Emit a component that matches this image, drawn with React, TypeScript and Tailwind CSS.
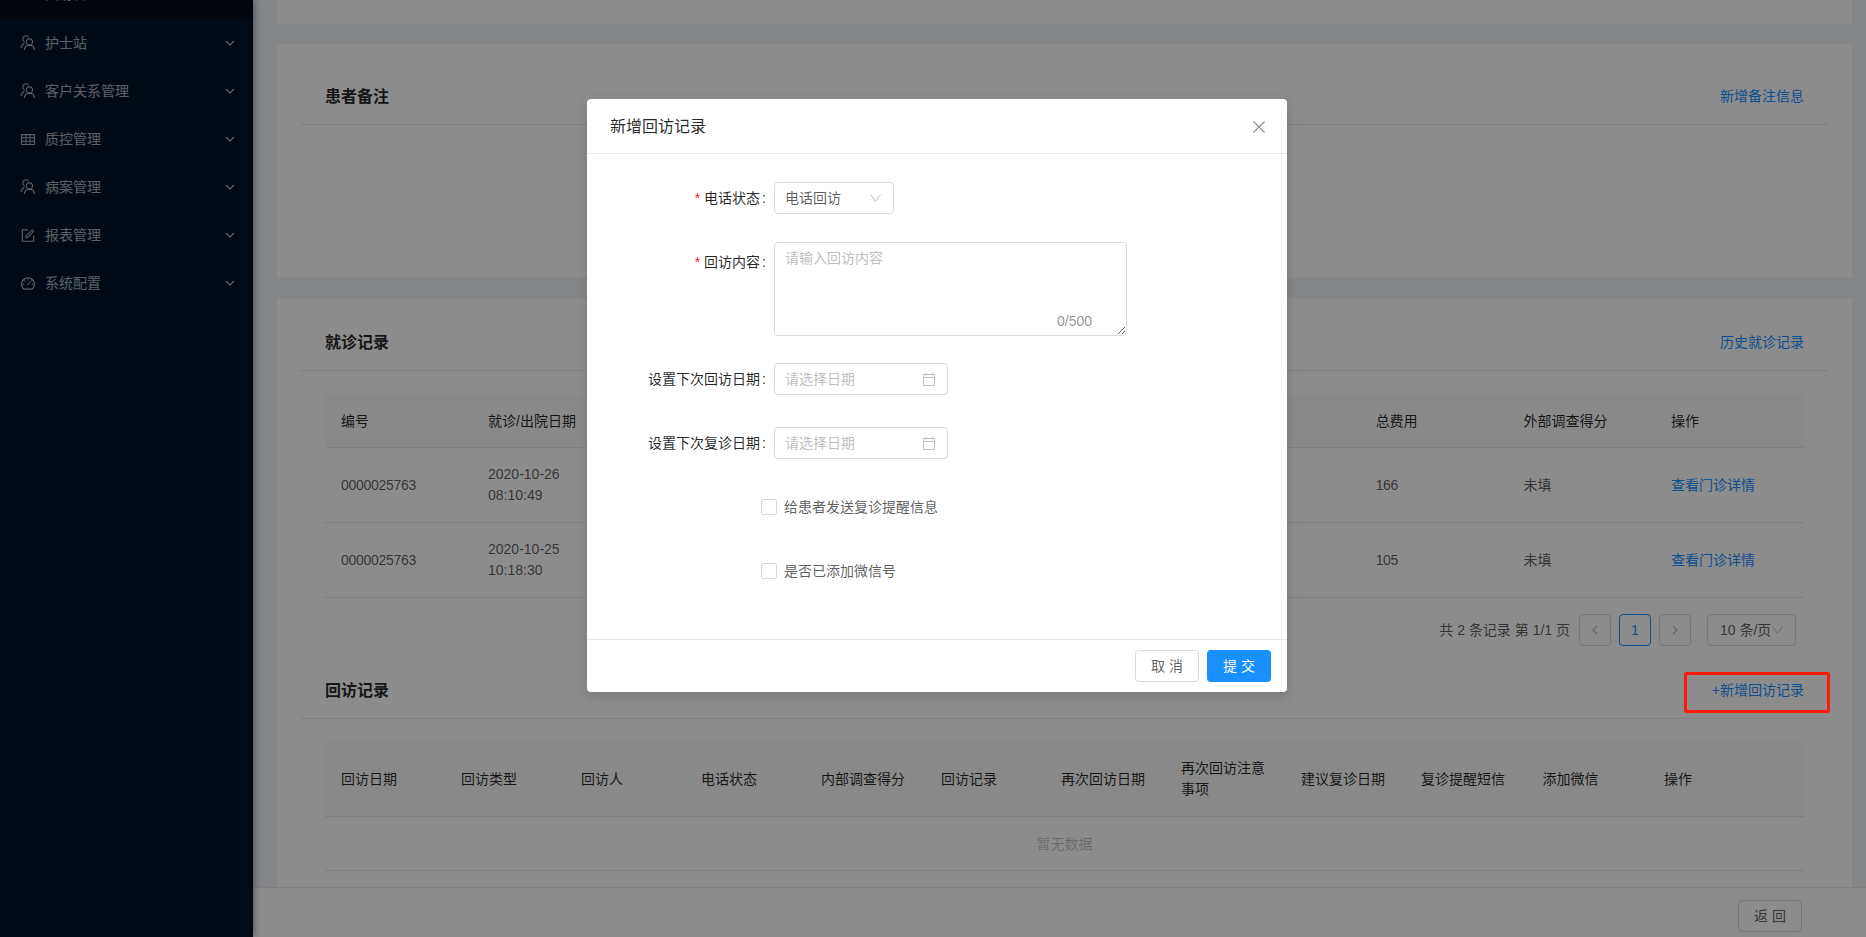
import { AiOutlineDashboard, AiOutlineForm, AiOutlineTable } from "react-icons/ai";

const TeamIcon = () => (
  <svg width="16" height="16" viewBox="0 0 16 16" fill="none" stroke="currentColor" strokeWidth="1.1">
    <path d="M8.6 1.8A3.4 3.4 0 1 0 4.6 7.2" />
    <path d="M4.4 8.6C2.5 9.4 1.3 11 1 13.2" />
    <circle cx="9.4" cy="7" r="3.1" />
    <path d="M4.4 15c.2-2.8 2.2-4.8 5-4.8s4.8 2 5 4.8" />
  </svg>
);

const Chevron = ({ className }: { className: string }) => (
  <svg className={className} viewBox="0 0 10 6" fill="none" stroke="currentColor" strokeWidth="1.4">
    <path d="M1 1l4 4 4-4" />
  </svg>
);

const ThinDown = () => (
  <svg className="w-[11px] h-[8px] text-[#bfbfbf]" viewBox="0 0 11 8" fill="none" stroke="currentColor">
    <path d="M.5 .5l5 7 5-7" />
  </svg>
);

const CalendarIcon = () => (
  <svg className="w-[14px] h-[14px] text-[#bfbfbf]" viewBox="0 0 14 14" fill="none" stroke="currentColor">
    <path d="M1.5 2.5h11v11h-11zM1.5 5.5h11M4 .5v3M10 .5v3" />
  </svg>
);

const menus = [
  { name: "护士站", icon: <TeamIcon /> },
  { name: "客户关系管理", icon: <TeamIcon /> },
  { name: "质控管理", icon: <AiOutlineTable size={17} /> },
  { name: "病案管理", icon: <TeamIcon /> },
  { name: "报表管理", icon: <AiOutlineForm size={17} /> },
  { name: "系统配置", icon: <AiOutlineDashboard size={17} /> },
];

const visitHeads = ["编号", "就诊/出院日期", "", "", "", "", "", "总费用", "外部调查得分", "操作"];
const visitRows = [
  { id: "0000025763", date: "2020-10-26", time: "08:10:49", fee: "166" },
  { id: "0000025763", date: "2020-10-25", time: "10:18:30", fee: "105" },
];
const followHeads = [
  "回访日期",
  "回访类型",
  "回访人",
  "电话状态",
  "内部调查得分",
  "回访记录",
  "再次回访日期",
  "再次回访注意事项",
  "建议复诊日期",
  "复诊提醒短信",
  "添加微信",
  "操作",
];

function Sidebar() {
  return (
    <aside className="relative z-10 w-[253px] shrink-0 bg-[#001529] text-white/65 shadow-[2px_0_6px_rgba(0,21,41,0.35)]">
      <div className="h-[19px] overflow-hidden bg-[#000c17] pl-[45px]">
        <div className="-mt-[17px] leading-[22px]">回访管理</div>
      </div>
      {menus.map((m) => (
        <div key={m.name} className="flex h-[48px] items-center justify-between pl-[20px] pr-[18px]">
          <div className="flex items-center gap-[9px]">
            <span className="flex w-[16px] justify-center">{m.icon}</span>
            <span>{m.name}</span>
          </div>
          <Chevron className="h-[6px] w-[10px]" />
        </div>
      ))}
    </aside>
  );
}

function SectionHead({ title, link }: { title: string; link: string }) {
  return (
    <div className="mx-[24px] flex h-[57px] items-center justify-between border-b border-[#e8e8e8] px-[24px]">
      <h3 className="pt-[1px] text-[16px] font-bold text-black/85">{title}</h3>
      <a className="text-[#1890ff]">{link}</a>
    </div>
  );
}

function VisitTable() {
  return (
    <div className="mx-[48px] mt-[23px] text-black/65">
      <div className="grid h-[54px] grid-cols-[147px_repeat(7,147.95px)_147.5px_1fr] items-center border-b border-[#e8e8e8] bg-[#fafafa] text-black/85">
        {visitHeads.map((h, i) => (
          <div key={i} className="px-[16px] whitespace-nowrap">{h}</div>
        ))}
      </div>
      {visitRows.map((r) => (
        <div key={r.date} className="grid h-[75px] grid-cols-[147px_repeat(7,147.95px)_147.5px_1fr] items-center border-b border-[#e8e8e8] leading-[21px]">
          <div className="px-[16px] tracking-[-0.3px]">{r.id}</div>
          <div className="px-[16px]">
            {r.date}
            <br />
            {r.time}
          </div>
          <div className="col-span-5" />
          <div className="px-[16px] tracking-[-0.3px]">{r.fee}</div>
          <div className="px-[16px]">未填</div>
          <div className="px-[16px] whitespace-nowrap text-[#1890ff]">查看门诊详情</div>
        </div>
      ))}
    </div>
  );
}

function Pager() {
  return (
    <div className="mx-[48px] mt-[16px] flex items-center justify-end pr-[8px] text-black/65">
      <span className="mr-[9px]">共 2 条记录 第 1/1 页</span>
      <div className="flex h-[32px] w-[32px] items-center justify-center rounded border border-[#d9d9d9] text-[#bfbfbf]">
        <Chevron className="h-[10px] w-[10px] rotate-90" />
      </div>
      <div className="ml-[8px] flex h-[32px] w-[32px] items-center justify-center rounded border border-[#1890ff] text-[#1890ff]">
        1
      </div>
      <div className="ml-[8px] flex h-[32px] w-[32px] items-center justify-center rounded border border-[#d9d9d9] text-[#bfbfbf]">
        <Chevron className="h-[10px] w-[10px] -rotate-90" />
      </div>
      <div className="ml-[16px] flex h-[32px] w-[89px] items-center justify-between rounded border border-[#d9d9d9] pl-[12px] pr-[12px]">
        <span className="whitespace-nowrap">10 条/页</span>
        <ThinDown />
      </div>
    </div>
  );
}

function FollowTable() {
  return (
    <div className="mx-[48px] mt-[23px] text-black/85">
      <div className="grid h-[75px] grid-cols-[repeat(9,120px)_121.5px_121.5px_1fr] items-center border-b border-[#e8e8e8] bg-[#fafafa] leading-[21px]">
        {followHeads.map((h) => (
          <div key={h} className="px-[16px]">{h}</div>
        ))}
      </div>
      <div className="flex h-[54px] items-center justify-center border-b border-[#e8e8e8] text-black/25">暂无数据</div>
    </div>
  );
}

function Row({ label, required, top, children }: { label: string; required?: boolean; top?: boolean; children: React.ReactNode }) {
  return (
    <div className="flex items-start">
      <label className={`flex h-[32px] w-[187px] items-center justify-end pr-[8px] text-black/85 ${top ? "mt-[4px]" : ""}`}>
        {required && <span className="mr-[4px] text-[#f5222d]">*</span>}
        {label}
        <span className="ml-[2px]">:</span>
      </label>
      {children}
    </div>
  );
}

function DateInput() {
  return (
    <div className="flex h-[32px] w-[174px] items-center rounded border border-[#d9d9d9] pl-[10px] pr-[11px]">
      <input readOnly placeholder="请选择日期" className="min-w-0 flex-1 outline-none placeholder:text-[#bfbfbf]" />
      <CalendarIcon />
    </div>
  );
}

function Check({ label }: { label: string }) {
  return (
    <div className="flex h-[16px] items-center gap-[7px] pl-[174px] text-black/65">
      <span className="h-[16px] w-[16px] rounded-[2px] border border-[#d9d9d9] bg-white" />
      <span>{label}</span>
    </div>
  );
}

function Dialog() {
  return (
    <div className="absolute left-[587px] top-[99px] z-30 flex h-[593px] w-[700px] flex-col rounded bg-white shadow-[0_4px_12px_rgba(0,0,0,0.15)]">
      <div className="flex h-[55px] items-center justify-between border-b border-[#e8e8e8] pl-[23px] pr-[22px] pt-[2px]">
        <h2 className="text-[16px] text-black/85">新增回访记录</h2>
        <svg className="h-[12px] w-[12px] text-black/45" viewBox="0 0 12 12" fill="none" stroke="currentColor" strokeWidth="1.1">
          <path d="M.5 .5l11 11M11.5 .5l-11 11" />
        </svg>
      </div>

      <div className="flex flex-1 flex-col pt-[28px]">
        <Row label="电话状态" required>
          <div className="flex h-[32px] w-[120px] items-center justify-between rounded border border-[#d9d9d9] pl-[10px] pr-[12px] text-black/65">
            <span>电话回访</span>
            <ThinDown />
          </div>
        </Row>
        <div className="mt-[28px]">
          <Row label="回访内容" required top>
            <div className="relative h-[94px] w-[353px]">
              <textarea
                readOnly
                placeholder="请输入回访内容"
                className="block h-full w-full resize rounded border border-[#d9d9d9] px-[10px] py-[4px] outline-none placeholder:text-[#bfbfbf]"
              />
              <span className="absolute bottom-[4px] right-[35px] text-black/45">0/500</span>
            </div>
          </Row>
        </div>
        <div className="mt-[27px]">
          <Row label="设置下次回访日期">
            <DateInput />
          </Row>
        </div>
        <div className="mt-[32px]">
          <Row label="设置下次复诊日期">
            <DateInput />
          </Row>
        </div>
        <div className="mt-[40px]">
          <Check label="给患者发送复诊提醒信息" />
        </div>
        <div className="mt-[48px]">
          <Check label="是否已添加微信号" />
        </div>
      </div>

      <div className="flex h-[53px] items-start justify-end gap-[8px] border-t border-[#e8e8e8] px-[16px] pt-[10px]">
        <button className="h-[32px] w-[64px] rounded border border-[#d9d9d9] bg-white text-black/65">取 消</button>
        <button className="h-[32px] w-[64px] rounded bg-[#1890ff] text-white">提 交</button>
      </div>
    </div>
  );
}

export default function App() {
  return (
    <div className="relative flex h-[937px] w-full overflow-hidden bg-[#f0f2f5] font-['Liberation_Sans','Noto_Sans_CJK_SC',sans-serif] text-[14px] leading-[22px]">
      <Sidebar />

      <main className="flex min-w-0 flex-1 flex-col">
        <div className="flex flex-1 flex-col gap-[20px] overflow-hidden pl-[24px] pr-[14px]">
          <div className="h-[24px] shrink-0 bg-white" />
          <section className="h-[234px] shrink-0 bg-white pt-[24px]">
            <SectionHead title="患者备注" link="新增备注信息" />
          </section>
          <section className="flex-1 bg-white pt-[16px]">
            <SectionHead title="就诊记录" link="历史就诊记录" />
            <VisitTable />
            <Pager />
            <div className="mt-[16px]">
              <SectionHead title="回访记录" link="+新增回访记录" />
            </div>
            <FollowTable />
          </section>
        </div>
        <div className="flex h-[50px] shrink-0 items-start justify-end border-t border-[#e8e8e8] bg-white pr-[64px] pt-[12px]">
          <button className="h-[32px] w-[64px] rounded border border-[#d9d9d9] bg-white text-black/65">返 回</button>
        </div>
      </main>

      <div className="absolute inset-0 z-20 bg-black/45" />
      <Dialog />
      <div className="absolute left-[1684px] top-[672px] z-30 h-[41px] w-[146px] rounded-[2px] border-[3px] border-[#ff1a0a]" />
    </div>
  );
}
